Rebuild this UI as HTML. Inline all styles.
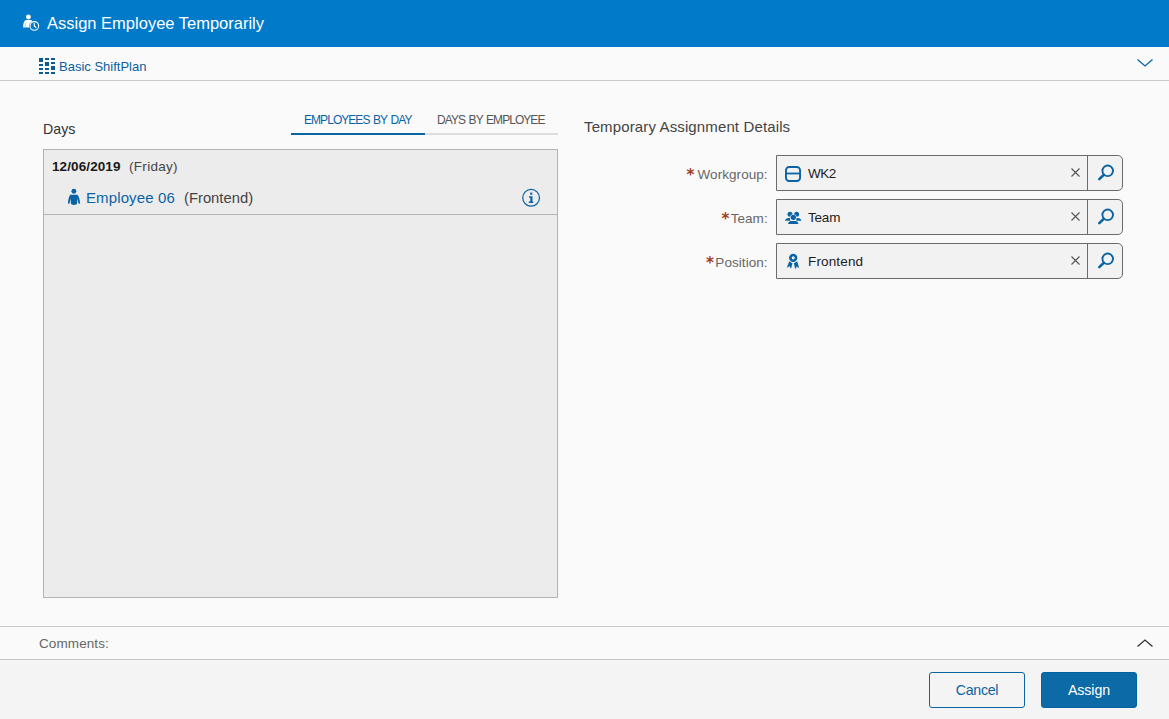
<!DOCTYPE html>
<html lang="en">
<head>
<meta charset="utf-8">
<title>Assign Employee Temporarily</title>
<style>
html,body{margin:0;padding:0;}
body{width:1169px;height:719px;overflow:hidden;background:#fafafa;font-family:"Liberation Sans",sans-serif;color:#333;position:relative;}
.abs{position:absolute;white-space:nowrap;}
#hdr{left:0;top:0;width:1169px;height:47px;background:#007ac9;}
#title{left:47px;top:11px;font-size:16.5px;line-height:24px;color:#fff;}
#ctx{left:0;top:47px;width:1169px;height:33px;border-bottom:1px solid #c9c9c9;background:#fafafa;}
#ctxtxt{left:59px;top:58px;font-size:13px;line-height:18px;color:#0a5f9e;}
#days{left:43px;top:119px;font-size:14.2px;line-height:20px;color:#333;}
.tab{top:112px;font-size:12px;line-height:16px;letter-spacing:-0.95px;word-spacing:1.2px;}
#tab1{left:304px;color:#0a64a4;}
#tab2{left:437px;color:#555;}
#tl1{left:291px;top:133px;width:134px;height:2px;background:#0a64a4;}
#tl2{left:425px;top:133px;width:133px;height:2px;background:#dedede;}
#box{left:43px;top:149px;width:513px;height:447px;border:1px solid #b3b3b3;background:#ececec;}
#rowsep{left:44px;top:214px;width:513px;height:1px;background:#b3b3b3;}
#date{left:52px;top:158px;font-size:13.5px;line-height:18px;color:#1a1a1a;font-weight:bold;letter-spacing:0.1px;}
#dow{left:129px;top:158px;font-size:13.5px;line-height:18px;color:#444;letter-spacing:0.3px;}
#emp{left:86px;top:188px;font-size:15px;line-height:20px;color:#0a64a4;letter-spacing:0.12px;}
#emppos{left:184px;top:188px;font-size:14.8px;line-height:20px;color:#444;}
#tad{left:584px;top:117px;font-size:15px;line-height:20px;color:#444;letter-spacing:0.13px;}
.lbl{font-size:13.5px;line-height:18px;color:#666;text-align:right;width:180px;left:587.7px;letter-spacing:0.06px;}
.ast{font-family:"DejaVu Sans",sans-serif;font-size:15px;font-weight:bold;line-height:20px;color:#a03c1e;}
.fld{left:776px;width:345px;height:34px;border:1px solid #6b6b6b;border-radius:0 5px 5px 0;background:#f2f2f2;}
.fld .div{position:absolute;left:310px;top:0;width:1px;height:34px;background:#6b6b6b;}
.val{font-size:13.5px;line-height:18px;color:#1c1c1c;left:31px;top:9px;}
#cmtline1{left:0;top:626px;width:1169px;height:1px;background:#c9c9c9;}
#cmt{left:39px;top:635px;font-size:13.5px;line-height:18px;color:#666;letter-spacing:0.1px;}
#foot{left:0;top:659px;width:1169px;height:60px;background:#f4f4f4;border-top:1px solid #c6c6c6;box-sizing:border-box;}
.btn{top:672px;width:96px;height:36px;box-sizing:border-box;border-radius:3px;font-size:14.2px;line-height:34px;text-align:center;}
#cancel{left:929px;border:1px solid #0a64a4;background:#f4f4f4;color:#0a64a4;letter-spacing:-0.3px;}
#assign{left:1041px;border:1px solid #0064a0;background:#0c6aa6;color:#fff;letter-spacing:-0.1px;}
svg{position:absolute;overflow:visible;}
</style>
</head>
<body>
<div id="hdr" class="abs"></div>
<svg style="left:20px;top:12px" width="20" height="20" viewBox="0 0 20 20">
  <circle cx="8.4" cy="5" r="2.45" fill="#fff"/>
  <path d="M5.8 8 L11.4 8 C12.6 9.4 13.4 11.5 13.6 15.5 L3.1 15.5 C3.1 11.5 3.9 8.8 5.8 8 Z" fill="#fff"/>
  <path d="M5.3 11.2 L4.9 15.6" stroke="#007ac9" stroke-width="0.5" opacity="0.6"/>
  <circle cx="14.35" cy="13.95" r="5.2" fill="#007ac9"/>
  <circle cx="14.35" cy="13.95" r="4.35" fill="none" stroke="#fff" stroke-width="1.05"/>
  <path d="M14.2 11 L14.3 14 L16.3 15.8" fill="none" stroke="#fff" stroke-width="1.1" stroke-linejoin="round"/>
</svg>
<div id="title" class="abs">Assign Employee Temporarily</div>

<div id="ctx" class="abs"></div>
<svg style="left:39px;top:58px" width="16" height="16" viewBox="0 0 16 16" fill="#0a5a98" shape-rendering="crispEdges">
  <rect x="0" y="0" width="4" height="4"/><rect x="0" y="6" width="4" height="2"/><rect x="0" y="10" width="4" height="2"/><rect x="0" y="14" width="4" height="2"/>
  <rect x="6" y="0" width="4" height="2"/><rect x="6" y="4" width="4" height="4"/><rect x="6" y="10" width="4" height="2"/><rect x="6" y="14" width="4" height="2"/>
  <rect x="12" y="0" width="4" height="2"/><rect x="12" y="4" width="4" height="2"/><rect x="12" y="8" width="4" height="4"/><rect x="12" y="14" width="4" height="2"/>
</svg>
<div id="ctxtxt" class="abs">Basic ShiftPlan</div>
<svg style="left:1137px;top:59px" width="16" height="8" viewBox="0 0 16 8"><path d="M0.5 0.5 L8 7 L15.5 0.5" fill="none" stroke="#0a64a4" stroke-width="1.3"/></svg>

<div id="days" class="abs">Days</div>
<div id="tab1" class="abs tab">EMPLOYEES BY DAY</div>
<div id="tab2" class="abs tab">DAYS BY EMPLOYEE</div>
<div id="tl1" class="abs"></div>
<div id="tl2" class="abs"></div>

<div id="box" class="abs"></div>
<div id="rowsep" class="abs"></div>
<div id="date" class="abs">12/06/2019</div>
<div id="dow" class="abs">(Friday)</div>
<svg style="left:62px;top:184px" width="30" height="26" viewBox="0 0 30 26" fill="#0a64a4">
  <circle cx="11.9" cy="7.2" r="2.45"/>
  <path d="M8.1 10.8 L15.6 10.8 C16.9 12.5 17.9 16 18.1 19.5 L16.6 19.8 L15.3 14.6 L15 19.6 Q15 21 11.9 21 Q8.9 21 8.9 19.6 L8.6 14.6 L7.4 19.8 L5.9 19.5 C6.1 16 7 12.5 8.1 10.8 Z"/>
</svg>
<div id="emp" class="abs">Employee 06</div>
<div id="emppos" class="abs">(Frontend)</div>
<svg style="left:522px;top:189px" width="18" height="18" viewBox="0 0 18 18">
  <circle cx="9.1" cy="8.8" r="8.35" fill="none" stroke="#0a64a4" stroke-width="1.25"/>
  <rect x="8.1" y="3.6" width="2.2" height="2.1" fill="#0a64a4"/>
  <path d="M7 7.2 H10.5 V12.5 H11.2 V14.1 H6.8 V12.5 H8.3 V8.8 H7 Z" fill="#0a64a4"/>
</svg>

<div id="tad" class="abs">Temporary Assignment Details</div>

<div class="abs ast" style="left:686.5px;top:165px">*</div><div class="abs lbl" style="top:166px">Workgroup:</div>
<div class="abs ast" style="left:721.5px;top:209px">*</div><div class="abs lbl" style="top:210px">Team:</div>
<div class="abs ast" style="left:706px;top:253px">*</div><div class="abs lbl" style="top:254px">Position:</div>

<div class="abs fld" style="top:155px"><svg style="left:3px;top:5px" width="26" height="24" viewBox="0 0 26 24"><rect x="5.95" y="5.95" width="14.1" height="14.1" rx="3.3" fill="none" stroke="#0a64a4" stroke-width="1.9"/><path d="M6 12.5 H20" stroke="#0a64a4" stroke-width="1.8"/></svg><div class="abs val" style="letter-spacing:-0.5px">WK2</div><svg style="left:-1px;top:-1px" width="347" height="36" viewBox="0 0 347 36"><path d="M295.5 13.5 L303.5 21.5 M303.5 13.5 L295.5 21.5" stroke="#555" stroke-width="1.1" fill="none"/><circle cx="331.7" cy="15.8" r="5.3" fill="none" stroke="#0a64a4" stroke-width="1.9"/><path d="M327.7 19.8 L323.3 24.2" stroke="#0a64a4" stroke-width="2.6" stroke-linecap="round"/></svg><div class="div"></div></div>
<div class="abs fld" style="top:199px"><svg style="left:3px;top:5px" width="26" height="24" viewBox="0 0 26 24" fill="#0a64a4"><circle cx="10" cy="9.2" r="2.5"/><circle cx="16.6" cy="9.2" r="2.5"/><path d="M5 15.7 Q5.8 12.9 8.5 12.9 L10.2 12.9 L10.2 15.7 Z"/><path d="M21.4 15.7 Q20.6 12.9 17.9 12.9 L16.3 12.9 L16.3 15.7 Z"/><circle cx="13.3" cy="12.35" r="3.2" fill="#f2f2f2"/><circle cx="13.3" cy="12.35" r="2.65"/><path d="M8 18.9 Q8.6 16 11 16 L15.5 16 Q17.9 16 18.4 18.9 Z"/></svg><div class="abs val" style="letter-spacing:-0.2px">Team</div><svg style="left:-1px;top:-1px" width="347" height="36" viewBox="0 0 347 36"><path d="M295.5 13.5 L303.5 21.5 M303.5 13.5 L295.5 21.5" stroke="#555" stroke-width="1.1" fill="none"/><circle cx="331.7" cy="15.8" r="5.3" fill="none" stroke="#0a64a4" stroke-width="1.9"/><path d="M327.7 19.8 L323.3 24.2" stroke="#0a64a4" stroke-width="2.6" stroke-linecap="round"/></svg><div class="div"></div></div>
<div class="abs fld" style="top:243px"><svg style="left:3px;top:5px" width="26" height="24" viewBox="0 0 26 24" fill="#0a64a4"><path d="M9.2 12.2 L12.5 14.2 L11 19.8 L9.5 17.2 L6.8 18.8 Z"/><path d="M17.2 12.2 L13.9 14.2 L15.2 20.2 L16.7 17.4 L19.2 19.2 Z"/><circle cx="13.2" cy="8.85" r="4.7" fill="#f2f2f2"/><circle cx="13.2" cy="8.85" r="2.85" fill="none" stroke="#0a64a4" stroke-width="2.6"/></svg><div class="abs val" style="letter-spacing:0.15px">Frontend</div><svg style="left:-1px;top:-1px" width="347" height="36" viewBox="0 0 347 36"><path d="M295.5 13.5 L303.5 21.5 M303.5 13.5 L295.5 21.5" stroke="#555" stroke-width="1.1" fill="none"/><circle cx="331.7" cy="15.8" r="5.3" fill="none" stroke="#0a64a4" stroke-width="1.9"/><path d="M327.7 19.8 L323.3 24.2" stroke="#0a64a4" stroke-width="2.6" stroke-linecap="round"/></svg><div class="div"></div></div>

<div id="cmtline1" class="abs"></div>
<div id="cmt" class="abs">Comments:</div>
<svg style="left:1137px;top:639px" width="16" height="8" viewBox="0 0 16 8"><path d="M0.5 7.5 L8 1 L15.5 7.5" fill="none" stroke="#333" stroke-width="1.3"/></svg>

<div id="foot" class="abs"></div>
<div id="cancel" class="abs btn">Cancel</div>
<div id="assign" class="abs btn">Assign</div>
</body>
</html>
